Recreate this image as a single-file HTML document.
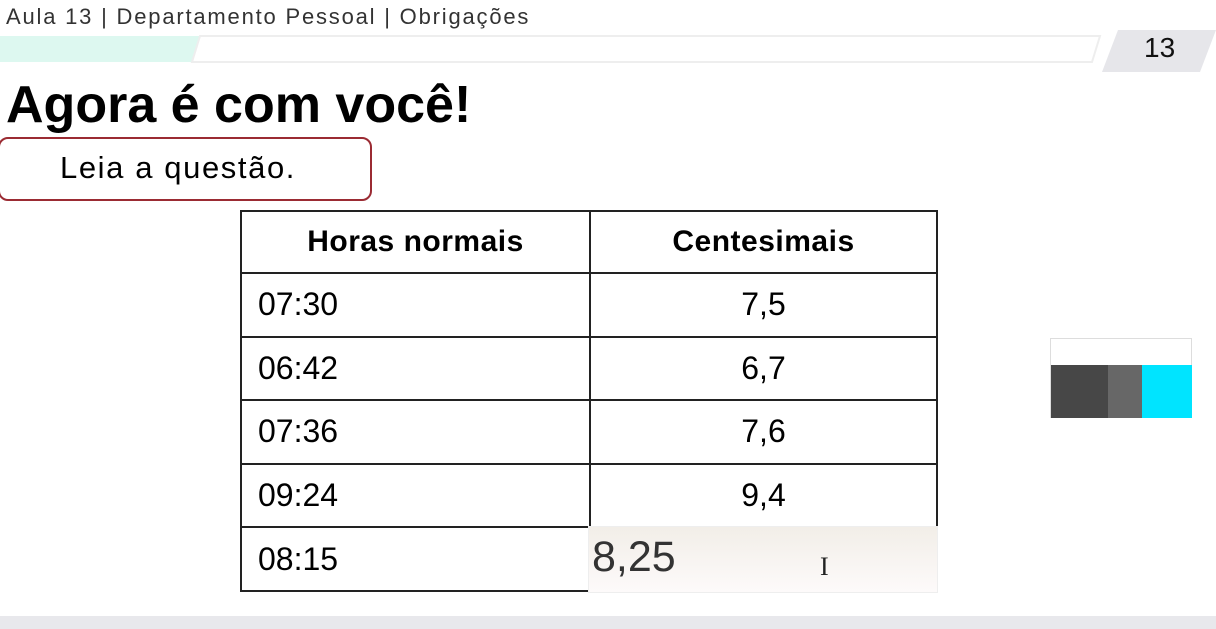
<!DOCTYPE html>
<html><head><meta charset="utf-8"><style>
body{margin:0;width:1216px;height:629px;position:relative;background:#fff;overflow:hidden;font-family:"Liberation Sans",sans-serif}
.a{position:absolute}
table{border-collapse:collapse;position:absolute;left:240px;top:210px;width:698px;table-layout:fixed}
td{border:2px solid #222;font-size:32px;padding:0 0 0 16px;color:#000;box-sizing:border-box;height:63.6px}
td.c{text-align:center;padding:0}
th{border:2px solid #222;height:62px;font-size:30px;font-weight:bold;letter-spacing:0.5px;box-sizing:border-box}
</style></head><body>
<div class="a" style="left:6px;top:4px;font-size:22px;color:#333;letter-spacing:1.8px">Aula 13 | Departamento Pessoal | Obrigações</div>
<svg class="a" style="left:0;top:30px" width="1216" height="45">
<polygon points="0,6 200,6 192,32 0,32" fill="#ddf8f0"/>
<polygon points="200,6 1100,6 1092,32 192,32" fill="#fff" stroke="#eee" stroke-width="2"/>
<polygon points="1118,0 1216,0 1200,42 1102,42" fill="#e6e6ea"/>
</svg>
<div class="a" style="left:1144px;top:32px;font-size:28px;color:#111">13</div>
<div class="a" style="left:6px;top:75px;font-size:52px;font-weight:bold;color:#000">Agora é com você!</div>
<div class="a" style="left:-2px;top:137px;width:374px;height:64px;border:2px solid #9b2b33;border-radius:10px;box-sizing:border-box"></div>
<div class="a" style="left:60px;top:150px;font-size:31px;color:#000;letter-spacing:1.6px">Leia a questão.</div>
<table>
<colgroup><col style="width:349px"><col></colgroup>
<tr><th>Horas normais</th><th>Centesimais</th></tr>
<tr><td>07:30</td><td class="c">7,5</td></tr>
<tr><td>06:42</td><td class="c">6,7</td></tr>
<tr><td>07:36</td><td class="c">7,6</td></tr>
<tr><td>09:24</td><td class="c">9,4</td></tr>
<tr><td>08:15</td><td class="c"></td></tr>
</table>
<div class="a" style="left:588px;top:526px;width:350px;height:67px;background:linear-gradient(#f2eee8,#fdfafa);border:1px solid #eee;box-sizing:border-box"></div>
<div class="a" style="left:592px;top:533px;font-size:43px;color:#333">8,25</div>
<div class="a" style="left:820px;top:552px;font-size:26px;color:#222;font-family:'Liberation Serif',serif">I</div>
<div class="a" style="left:1050px;top:338px;width:142px;height:80px;border:1px solid #ddd;box-sizing:border-box;background:#fff">
<div class="a" style="left:0;top:26px;width:57px;height:53px;background:#474747"></div>
<div class="a" style="left:57px;top:26px;width:34px;height:53px;background:#676767"></div>
<div class="a" style="left:91px;top:26px;width:50px;height:53px;background:#00e4ff"></div>
</div>
<div class="a" style="left:0;top:616px;width:1216px;height:13px;background:#e8e8ec"></div>
</body></html>
